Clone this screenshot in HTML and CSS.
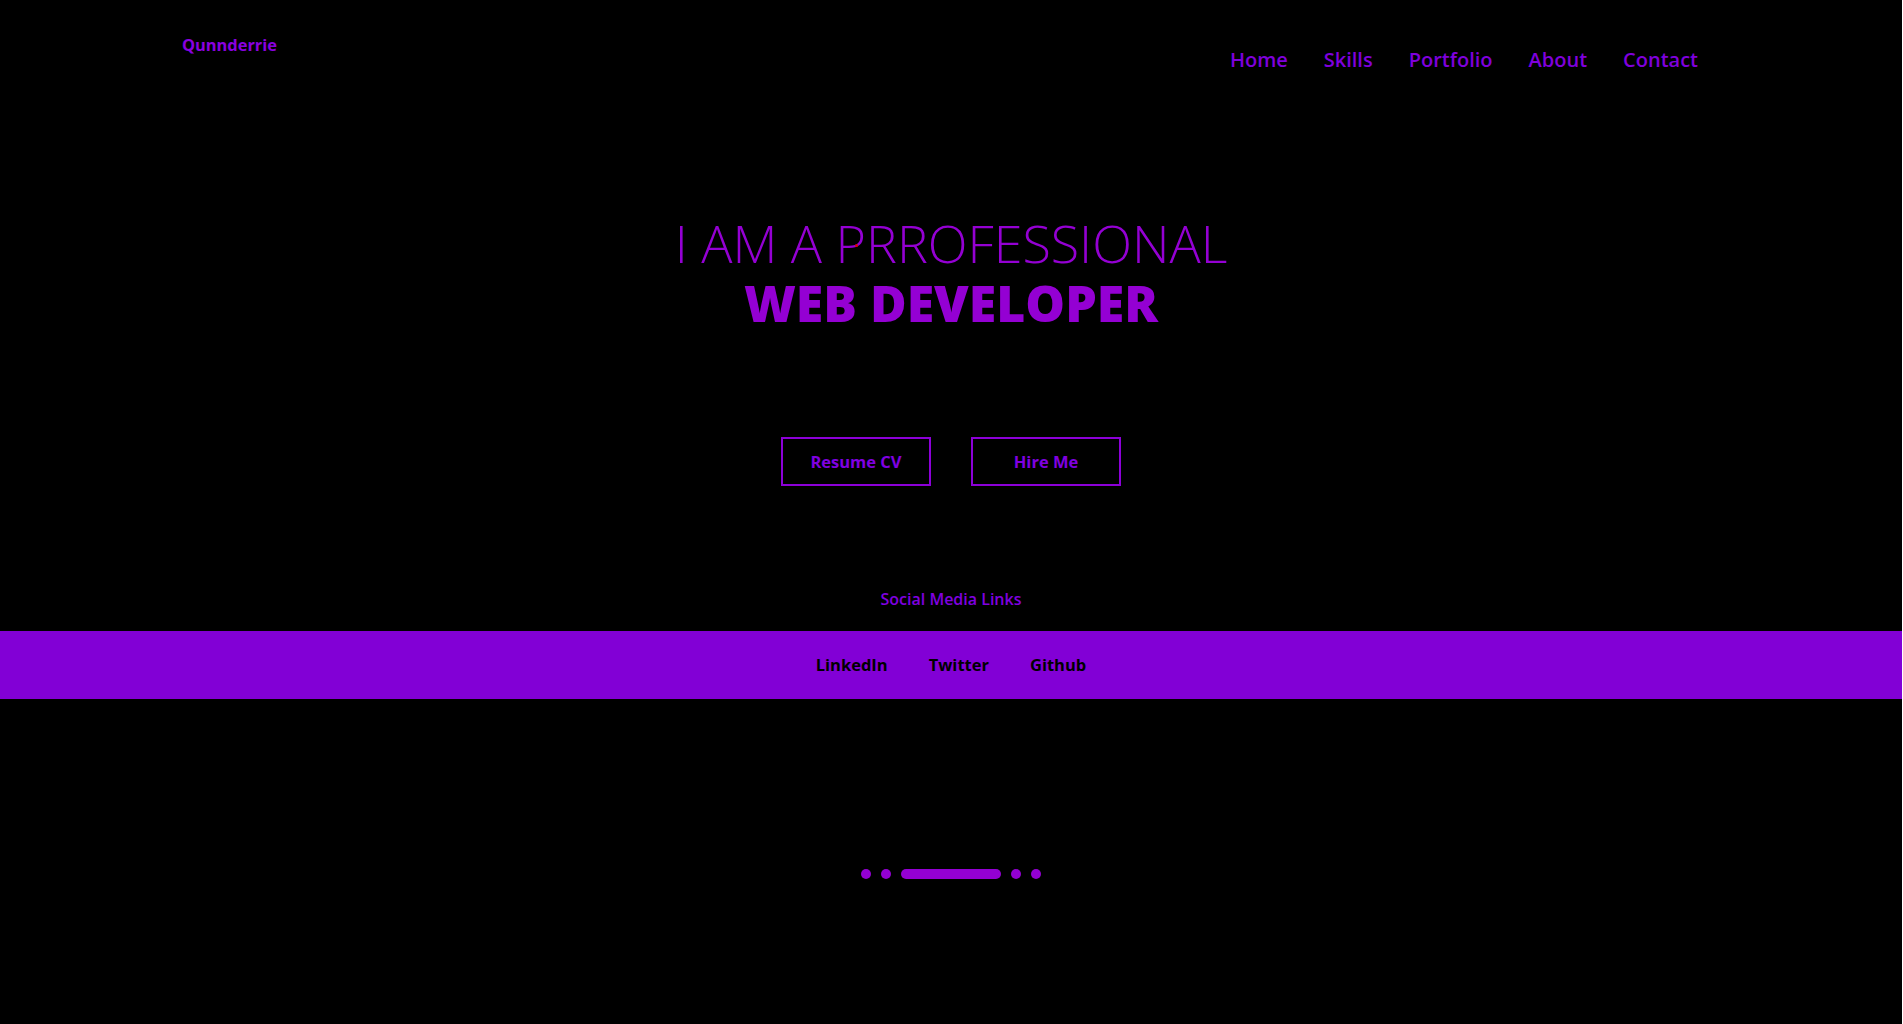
FILE: index.html
```html
<!DOCTYPE html>
<html lang="en">
<head>
<meta charset="utf-8">
<title>Qunnderrie</title>
<link rel="stylesheet" href="styles.css">
</head>
<body>
<div class="page">
  <header class="header">
    <div class="logo">Qunnderrie</div>
    <nav class="nav">
      <a href="#">Home</a>
      <a href="#">Skills</a>
      <a href="#">Portfolio</a>
      <a href="#">About</a>
      <a href="#">Contact</a>
    </nav>
  </header>

  <section class="hero">
    <div class="title-wrap">
      <h1 class="title">
        <span class="line light">I AM A PRROFESSIONAL</span>
        <span class="line heavy">WEB DEVELOPER</span>
      </h1>
      <span class="dot-mark"></span>
    </div>
    <div class="actions">
      <a class="btn" href="#">Resume CV</a>
      <a class="btn" href="#">Hire Me</a>
    </div>
  </section>

  <section class="social">
    <p class="social-title">Social Media Links</p>
    <div class="band">
      <a href="#">LinkedIn</a>
      <a href="#">Twitter</a>
      <a href="#">Github</a>
    </div>
  </section>

  <div class="pager">
    <span class="pip"></span>
    <span class="pip"></span>
    <span class="bar"></span>
    <span class="pip"></span>
    <span class="pip"></span>
  </div>
</div>
</body>
</html>
```

FILE: styles.css
```css
html, body {
  margin: 0;
  padding: 0;
  background: #ffffff;
}

body {
  font-family: "Open Sans", "Liberation Sans", sans-serif;
}

.page {
  width: 1902px;
  min-height: 1024px;
  background: #000000;
}

a {
  text-decoration: none;
}

.header {
  display: flex;
  justify-content: space-between;
  align-items: flex-start;
}

.logo {
  padding-top: 34px;
  padding-left: 182px;
  font-size: 16.4px;
  line-height: 22px;
  font-weight: 700;
  color: #8a00e0;
}

.nav {
  display: flex;
  gap: 36px;
  padding-top: 46px;
  padding-right: 204px;
}

.nav a {
  font-size: 20px;
  line-height: 28px;
  font-weight: 600;
  color: #7f00dc;
}

.hero {
  display: flex;
  flex-direction: column;
  align-items: center;
  padding-top: 139px;
}

.title-wrap {
  position: relative;
}

.title {
  margin: 0;
  display: flex;
  flex-direction: column;
  align-items: center;
  font-size: 52px;
  line-height: 60px;
  color: #9400d3;
  text-align: center;
}

.line {
  display: block;
}

.light {
  font-weight: 300;
}

.heavy {
  font-size: 50px;
  font-weight: 800;
}

.dot-mark {
  position: absolute;
  left: 180px;
  top: 31px;
  width: 3px;
  height: 3px;
  border-radius: 50%;
  background: #e00000;
}

.actions {
  display: flex;
  gap: 40px;
  margin-top: 104px;
}

.btn {
  box-sizing: border-box;
  width: 150px;
  height: 49px;
  display: flex;
  align-items: center;
  justify-content: center;
  border: 2px solid #8c00d8;
  font-size: 16.5px;
  line-height: 22px;
  font-weight: 700;
  color: #8000e0;
}

.social {
  margin-top: 102px;
}

.social-title {
  margin: 0;
  text-align: center;
  font-size: 16px;
  line-height: 22px;
  font-weight: 600;
  color: #8000e0;
}

.band {
  margin-top: 21px;
  display: flex;
  justify-content: center;
  gap: 41px;
  padding: 23px 0;
  background: #8200d6;
}

.band a {
  font-size: 16.5px;
  line-height: 22px;
  font-weight: 700;
  color: #000000;
}

.pager {
  display: flex;
  justify-content: center;
  align-items: center;
  gap: 10px;
  margin-top: 170px;
}

.pip {
  width: 10px;
  height: 10px;
  border-radius: 50%;
  background: #9400d3;
}

.bar {
  width: 100px;
  height: 10px;
  border-radius: 5px;
  background: #9400d3;
}
```
